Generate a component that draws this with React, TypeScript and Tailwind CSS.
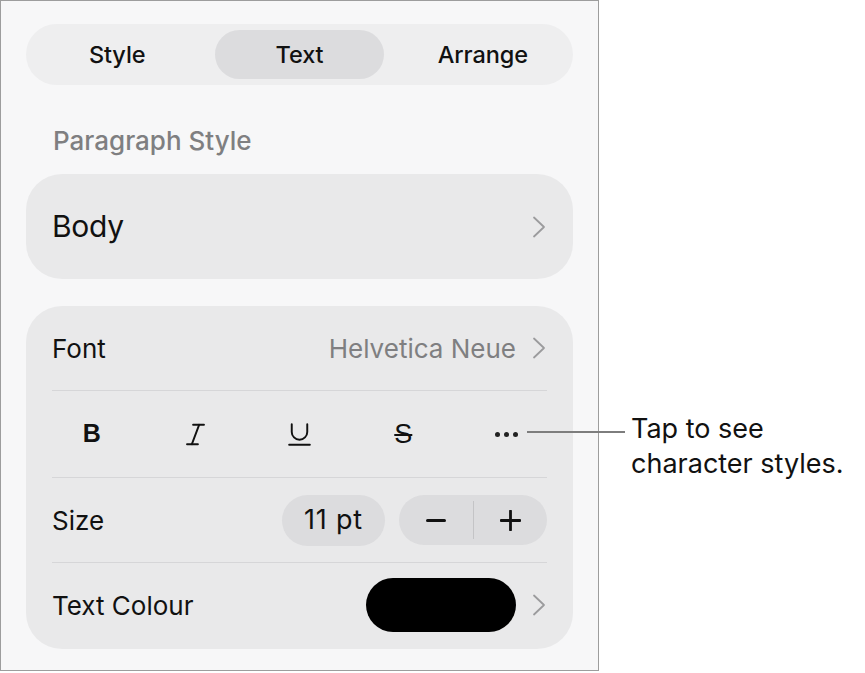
import React from "react";
import { Italic, Underline } from "lucide-react";

// 右向きの細いシェブロン
function Chevron() {
  return (
    <svg width="14" height="22" viewBox="0 0 14 22" fill="none" className="shrink-0">
      <path d="M2 1.5l10 9.5-10 9.5" stroke="#9b9b9d" strokeWidth="1.8" strokeLinecap="round" strokeLinejoin="round" />
    </svg>
  );
}

function Divider() {
  return <div className="h-px bg-[#d6d6d8] mx-[26px]" />;
}

export default function App() {
  return (
    <div
      className="relative w-[865px] h-[673px] bg-white text-[#111]"
      style={{ fontFamily: "Inter, 'Liberation Sans', sans-serif" }}
    >
      {/* パネル */}
      <div className="w-[599px] h-[671px] border border-[#9d9d9d] bg-[#f7f7f8] px-[25px] pt-[23px]">
        {/* タブ */}
        <div className="h-[61px] rounded-full bg-[#eeeeef] px-[6px] py-[6px] grid grid-cols-3 text-[23.5px] font-medium tracking-[-0.1px]">
          <div className="flex items-center justify-center pr-[8px]">Style</div>
          <div className="flex items-center justify-center rounded-full bg-[#dcdcde] mx-[5px]">Text</div>
          <div className="flex items-center justify-center pl-[10px]">Arrange</div>
        </div>

        <div className="mt-[40px] pl-[27px] text-[26px] font-medium text-[#7f7f81] leading-[32px] tracking-[0px]">
          Paragraph Style
        </div>

        {/* Body */}
        <div className="mt-[17px] h-[105px] rounded-[36px] bg-[#e9e9ea] flex items-center justify-between pl-[26px] pr-[27px]">
          <span className="text-[30px] tracking-[-0.3px]">Body</span>
          <Chevron />
        </div>

        {/* フォント設定 */}
        <div className="mt-[27px] rounded-[36px] bg-[#e9e9ea] pb-[2px] text-[26px]">
          <div className="h-[84px] flex items-center justify-between pl-[26px] pr-[27px]">
            <span>Font</span>
            <div className="flex items-center gap-[16px]">
              <span className="text-[#7f7f81]">Helvetica Neue</span>
              <Chevron />
            </div>
          </div>
          <Divider />
          <div className="h-[86px] grid grid-cols-5 px-[14px] items-center">
            <div className="flex justify-center">
              <span className="text-[25px] font-bold" style={{ fontFamily: "'Liberation Sans', sans-serif" }}>B</span>
            </div>
            <div className="flex justify-center">
              <Italic size={29} strokeWidth={1.6} />
            </div>
            <div className="flex justify-center">
              <Underline size={31} strokeWidth={1.5} />
            </div>
            <div className="flex justify-center">
              <span className="text-[27px] line-through decoration-[1.5px]" style={{ fontFamily: "'Liberation Sans', sans-serif" }}>S</span>
            </div>
            <div className="flex justify-center gap-[4px] pr-[2px]">
              <span className="w-[5px] h-[5px] rounded-full bg-[#222]" />
              <span className="w-[5px] h-[5px] rounded-full bg-[#222]" />
              <span className="w-[5px] h-[5px] rounded-full bg-[#222]" />
            </div>
          </div>
          <Divider />
          <div className="h-[84px] flex items-center justify-between pl-[26px] pr-[26px]">
            <span>Size</span>
            <div className="flex items-center gap-[14px]">
              <div className="w-[103px] h-[51px] rounded-full bg-[#dcdcde] flex items-center justify-center text-[27px] tracking-[0.8px]">
                11 pt
              </div>
              <div className="w-[148px] h-[50px] rounded-full bg-[#dcdcde] flex items-center">
                <div className="flex-1 flex items-center justify-center">
                  <span className="w-[20px] h-[3px] bg-[#111] rounded-full" />
                </div>
                <div className="w-px h-[38px] bg-[#c4c4c6]" />
                <div className="flex-1 flex items-center justify-center">
                  <svg width="21" height="21" viewBox="0 0 21 21">
                    <path d="M10.5 1v19M1 10.5h19" stroke="#111" strokeWidth="2.8" strokeLinecap="round" />
                  </svg>
                </div>
              </div>
            </div>
          </div>
          <Divider />
          <div className="h-[84px] flex items-center justify-between pl-[26px] pr-[27px]">
            <span>Text Colour</span>
            <div className="flex items-center gap-[16px]">
              <div className="w-[150px] h-[54px] rounded-full bg-black" />
              <Chevron />
            </div>
          </div>
        </div>
      </div>

      {/* 吹き出し注記 */}
      <div className="absolute left-[527px] top-[431px] w-[98px] h-[2px] bg-[#7d7d7d]" />
      <div className="absolute left-[631px] top-[411px] text-[27px] leading-[35px] text-[#111] tracking-[0px]">
        Tap to see
        <br />
        character styles.
      </div>
    </div>
  );
}
